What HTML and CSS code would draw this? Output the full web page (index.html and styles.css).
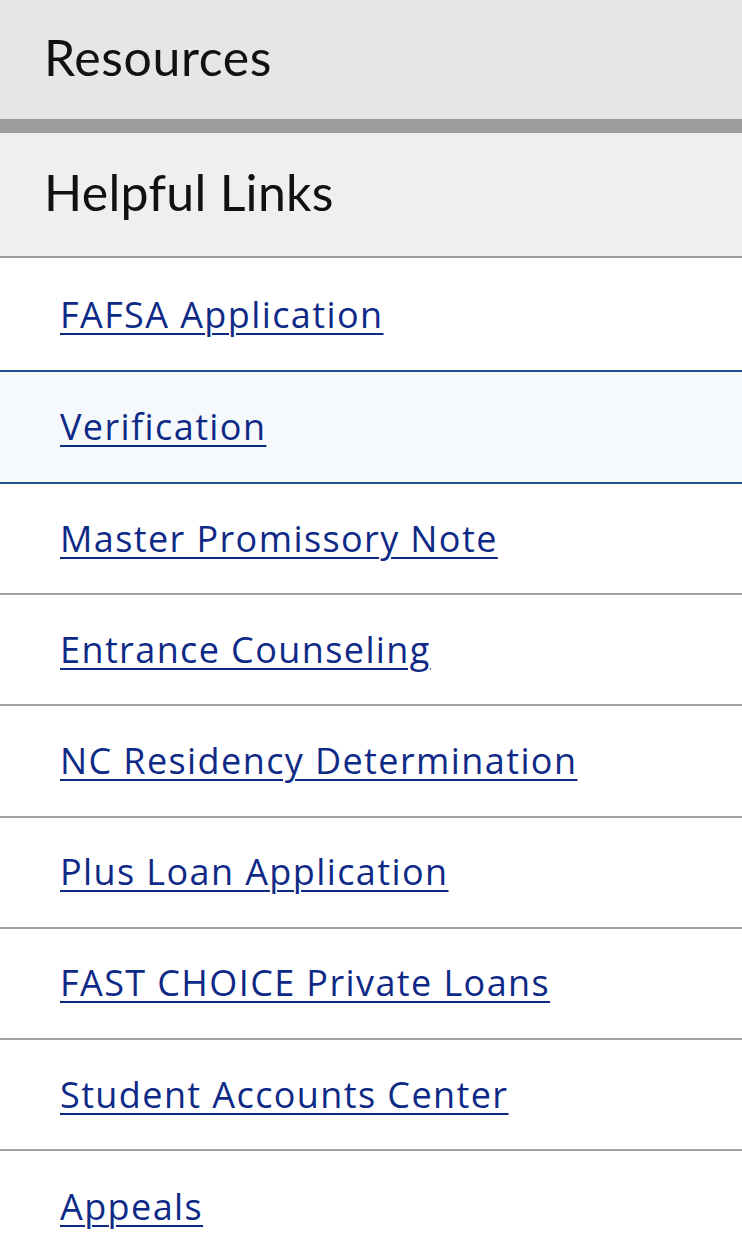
FILE: index.html
```html
<!DOCTYPE html>
<html lang="en">
<head>
<meta charset="utf-8">
<title>Resources</title>
<link rel="stylesheet" href="styles.css">
</head>
<body>
<div class="panel">
  <h2 class="section-title">Resources</h2>
  <div class="links-block">
    <h3 class="links-title">Helpful Links</h3>
    <ul class="link-list">
      <li class="link-item before-active"><a href="#">FAFSA Application</a></li>
      <li class="link-item active"><a href="#">Verification</a></li>
      <li class="link-item"><a href="#">Master Promissory Note</a></li>
      <li class="link-item"><a href="#">Entrance Counseling</a></li>
      <li class="link-item"><a href="#">NC Residency Determination</a></li>
      <li class="link-item"><a href="#">Plus Loan Application</a></li>
      <li class="link-item"><a href="#">FAST CHOICE Private Loans</a></li>
      <li class="link-item"><a href="#">Student Accounts Center</a></li>
      <li class="link-item last"><a href="#">Appeals</a></li>
    </ul>
  </div>
</div>
</body>
</html>
```

FILE: styles.css
```css
html, body {
  margin: 0;
  padding: 0;
  background: #ffffff;
}

.panel {
  width: 742px;
}

.section-title {
  margin: 0;
  height: 133px;
  box-sizing: border-box;
  padding: 0 0 6px 44px;
  display: flex;
  align-items: center;
  background: #e6e6e6;
  border-bottom: 14px solid #9d9d9d;
  font-family: "Lato", "Noto Sans", sans-serif;
  font-weight: 400;
  font-size: 50px;
  letter-spacing: 0.6px;
  color: #111111;
  line-height: 1;
}

.links-title {
  margin: 0;
  height: 125px;
  box-sizing: border-box;
  padding: 0 0 6px 44px;
  display: flex;
  align-items: center;
  background: #efefef;
  border-bottom: 2px solid #9a9a9a;
  font-family: "Lato", "Noto Sans", sans-serif;
  font-weight: 400;
  font-size: 50px;
  letter-spacing: 0.3px;
  color: #111111;
  line-height: 1;
}

.link-list {
  list-style: none;
  margin: 0;
  padding: 0;
}

.link-item {
  height: 111.2px;
  box-sizing: border-box;
  padding: 0 0 0 60px;
  display: flex;
  align-items: center;
  border-bottom: 2px solid #a0a0a0;
  background: #ffffff;
}

.link-item.before-active {
  height: 114px;
  padding-top: 2px;
  border-bottom-color: #1d4f91;
}

.link-item.active {
  background: #f5f9fc;
  height: 112px;
  border-bottom-color: #1d4f91;
}

.link-item.last {
  border-bottom: none;
}

.link-item a {
  font-family: "Open Sans", "Noto Sans", sans-serif;
  font-size: 36px;
  font-weight: 500;
  line-height: 44px;
  color: #0e2a86;
  text-decoration: underline;
  text-decoration-thickness: 2px;
  text-underline-offset: 5px;
  letter-spacing: 1.4px;
}
```
